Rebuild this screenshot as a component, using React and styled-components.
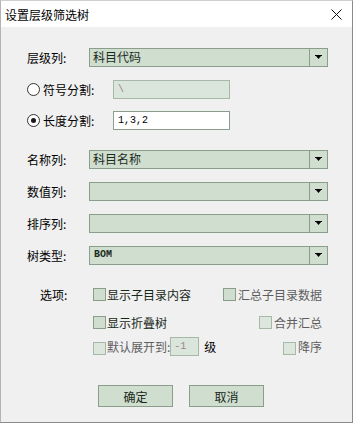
import React from "react";
import styled, { createGlobalStyle } from "styled-components";

const Global = createGlobalStyle`
  html, body { margin: 0; padding: 0; background: #ffffff; }
  body { font-family: "Noto Sans CJK SC", "Noto Sans", sans-serif; }
  * { box-sizing: border-box; }
`;

const CJK = `"Noto Sans CJK SC", "Noto Sans", sans-serif`;
const MONO = `"Liberation Mono", "DejaVu Sans Mono", monospace`;

const Window = styled.div`
  width: 353px;
  height: 423px;
  border: 1px solid #8a8a8a;
  border-top-color: #cfcfcf;
  border-left-color: #b4b4b4;
  background: #f0f0f0;
  display: flex;
  flex-direction: column;
`;

const TitleBar = styled.div`
  height: 26px;
  background: #ffffff;
  display: flex;
  align-items: center;
  justify-content: space-between;
  padding: 0 10px 0 4px;
  font-family: ${CJK};
  font-size: 12px;
  color: #000;
`;

const Body = styled.div`
  flex: 1;
  padding: 21px 0 0 26px;
  display: flex;
  flex-direction: column;
`;

const Row = styled.div`
  display: flex;
  align-items: center;
  height: 19px;
  margin-top: ${(p) => p.$mt || 0}px;
`;

const Label = styled.div`
  width: ${(p) => p.$w || 62}px;
  font-family: ${CJK};
  font-size: 12px;
  color: #000;
  line-height: 19px;
  white-space: nowrap;
`;

const Combo = styled.div`
  width: 239px;
  height: 19px;
  border: 1px solid #8b9d8b;
  background: #cfdecf;
  display: flex;
`;

const ComboText = styled.div`
  flex: 1;
  padding-left: ${(p) => (p.$mono ? 4 : 3)}px;
  font-family: ${(p) => (p.$mono ? MONO : CJK)};
  font-size: ${(p) => (p.$mono ? 10 : 12)}px;
  font-weight: ${(p) => (p.$mono ? 700 : 400)};
  line-height: 16px;
  color: #1c2c1c;
  white-space: nowrap;
`;

const ComboButton = styled.div`
  width: 18px;
  border-left: 1px solid #8b9d8b;
  display: flex;
  align-items: center;
  justify-content: center;
  padding-bottom: 2px;
`;

const Radio = styled.span`
  width: 13px;
  height: 13px;
  border-radius: 50%;
  border: 1px solid #333;
  background: #fff;
  margin-right: 3px;
  display: flex;
  align-items: center;
  justify-content: center;
  &::after {
    content: "";
    width: 5px;
    height: 5px;
    border-radius: 50%;
    background: ${(p) => (p.$checked ? "#1a1a1a" : "transparent")};
  }
`;

const TextBox = styled.div`
  width: ${(p) => p.$w || 117}px;
  height: 19px;
  border: 1px solid ${(p) => (p.$disabled ? "#a6b8a7" : "#8b9d8b")};
  background: ${(p) => (p.$disabled ? "#dae5db" : "#ffffff")};
  font-family: ${MONO};
  font-size: 10px;
  line-height: 17px;
  padding-left: ${(p) => p.$pl ?? 4}px;
  color: ${(p) => (p.$disabled ? "#9a8585" : "#000")};
  white-space: nowrap;
`;

const Options = styled.div`
  display: flex;
  margin-top: 20px;
  padding-left: 13px;
`;

const OptRows = styled.div`
  width: 229px;
  display: flex;
  flex-direction: column;
`;

const OptRow = styled.div`
  display: flex;
  align-items: center;
  justify-content: space-between;
  height: 19px;
  margin-top: ${(p) => p.$mt || 0}px;
`;

const Check = styled.label`
  display: flex;
  align-items: center;
  font-family: ${CJK};
  font-size: 12px;
  line-height: 19px;
  color: ${(p) => (p.$muted ? "#5e5e5e" : "#182818")};
  white-space: nowrap;
`;

const Box = styled.span`
  width: 13px;
  height: 13px;
  margin-right: ${(p) => p.$gap ?? 1}px;
  margin-top: ${(p) => p.$dy || 0}px;
  border: 1px solid ${(p) => (p.$muted ? "#a6b8a7" : "#8b9d8b")};
  background: ${(p) => (p.$muted ? "#dce6dd" : "#cfdecf")};
`;

const Inline = styled.div`
  display: flex;
  align-items: center;
`;

const Level = styled.span`
  margin-left: 5px;
  font-family: ${CJK};
  font-size: 12px;
  color: #000;
`;

const Buttons = styled.div`
  display: flex;
  gap: 16px;
  margin-top: 29px;
  padding-left: 71px;
`;

const Button = styled.button`
  width: 75px;
  height: 22px;
  border: 1px solid #8b9d8b;
  background: #cfdecf;
  font-family: ${CJK};
  font-size: 12px;
  color: #182818;
  padding: 0;
`;

const Arrow = () => (
  <svg width="7" height="4" viewBox="0 0 7 4">
    <rect x="0" y="0" width="7" height="1" fill="#000" />
    <polygon points="1,1 6,1 3.5,4" fill="#000" />
  </svg>
);

const Close = () => (
  <svg width="11" height="11" viewBox="0 0 11 11">
    <path d="M0.5 0.5 L10.5 10.5 M10.5 0.5 L0.5 10.5" stroke="#111" strokeWidth="1" fill="none" />
  </svg>
);

const ComboField = ({ value, mono }) => (
  <Combo>
    <ComboText $mono={mono}>{value}</ComboText>
    <ComboButton>
      <Arrow />
    </ComboButton>
  </Combo>
);

export default function App() {
  return (
    <>
      <Global />
      <Window>
        <TitleBar>
          <span>设置层级筛选树</span>
          <Close />
        </TitleBar>
        <Body>
          <Row>
            <Label>层级列:</Label>
            <ComboField value="科目代码" />
          </Row>
          <Row $mt={13}>
            <Radio />
            <Label $w={70}>符号分割:</Label>
            <TextBox $disabled>\</TextBox>
          </Row>
          <Row $mt={12}>
            <Radio $checked />
            <Label $w={70}>长度分割:</Label>
            <TextBox>1,3,2</TextBox>
          </Row>
          <Row $mt={20}>
            <Label>名称列:</Label>
            <ComboField value="科目名称" />
          </Row>
          <Row $mt={13}>
            <Label>数值列:</Label>
            <ComboField value="" />
          </Row>
          <Row $mt={13}>
            <Label>排序列:</Label>
            <ComboField value="" />
          </Row>
          <Row $mt={13}>
            <Label>树类型:</Label>
            <ComboField value="BOM" mono />
          </Row>
          <Options>
            <Label $w={53}>选项:</Label>
            <OptRows>
              <OptRow>
                <Check>
                  <Box />
                  显示子目录内容
                </Check>
                <Check $muted>
                  <Box $gap={2} />
                  汇总子目录数据
                </Check>
              </OptRow>
              <OptRow $mt={9}>
                <Check>
                  <Box />
                  显示折叠树
                </Check>
                <Check $muted>
                  <Box $muted $gap={2} />
                  合并汇总
                </Check>
              </OptRow>
              <OptRow $mt={5}>
                <Inline>
                  <Check $muted>
                    <Box $muted $dy={3} />
                    默认展开到:
                  </Check>
                  <TextBox $disabled $w={29} $pl={3}>-1</TextBox>
                  <Level>级</Level>
                </Inline>
                <Check $muted>
                  <Box $muted $gap={2} $dy={3} />
                  降序
                </Check>
              </OptRow>
            </OptRows>
          </Options>
          <Buttons>
            <Button>确定</Button>
            <Button>取消</Button>
          </Buttons>
        </Body>
      </Window>
    </>
  );
}
